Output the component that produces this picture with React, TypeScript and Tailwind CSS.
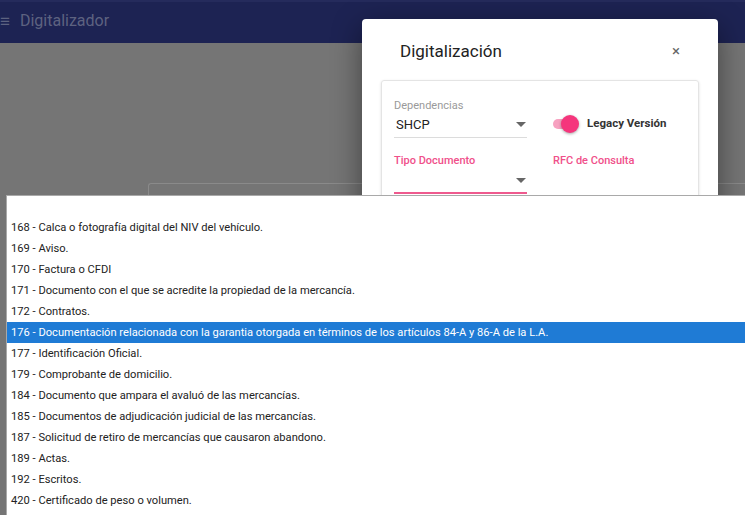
const options = [
  "",
  "168 - Calca o fotografía digital del NIV del vehículo.",
  "169 - Aviso.",
  "170 - Factura o CFDI",
  "171 - Documento con el que se acredite la propiedad de la mercancía.",
  "172 - Contratos.",
  "176 - Documentación relacionada con la garantia otorgada en términos de los artículos 84-A y 86-A de la L.A.",
  "177 - Identificación Oficial.",
  "179 - Comprobante de domicilio.",
  "184 - Documento que ampara el avaluó de las mercancías.",
  "185 - Documentos de adjudicación judicial de las mercancías.",
  "187 - Solicitud de retiro de mercancías que causaron abandono.",
  "189 - Actas.",
  "192 - Escritos.",
  "420 - Certificado de peso o volumen.",
]

function Caret() {
  return (
    <svg width="10" height="5" viewBox="0 0 10 5" className="shrink-0">
      <path d="M0 0h10L5 5z" fill="#666" />
    </svg>
  )
}

export default function App() {
  return (
    <div className="relative w-[745px] h-[515px] overflow-hidden bg-[#757575] font-['Roboto',sans-serif]">
      <header className="h-[43px] bg-[#1d2353] border-t-2 border-[#252b5c] flex items-center gap-[10px] text-[#5d6280]">
        <span className="text-[17px] leading-none -mt-[3px]">≡</span>
        <span className="text-[16px] -mt-[3px]">Digitalizador</span>
      </header>

      <div className="pt-[140px] pl-[148px]">
        <div className="h-[300px] border-t border-l border-[#8a8a8a] rounded-tl-[3px]" />
      </div>

      {/* dialog */}
      <div className="absolute left-[362px] top-[19px] w-[356px] h-[320px] bg-white rounded-[4px] shadow-[0_8px_30px_rgba(0,0,0,0.45)]">
        <div className="flex items-start justify-between pl-[38px] pr-[38px] pt-[20px] h-[61px]">
          <span className="text-[17px] text-[#222]">Digitalización</span>
          <span className="text-[15px] text-[#666] leading-none mt-[5px]">×</span>
        </div>
        <div className="mx-[19px] h-[200px] border border-[#e4e4e4] rounded-[3px] shadow-[0_1px_3px_rgba(0,0,0,0.12)] px-[12px] pt-[17px]">
          <div className="grid grid-cols-[133px_1fr] gap-x-[26px]">
            <div>
              <div className="text-[11px] text-[#9a9a9a]">Dependencias</div>
              <div className="h-[23px] flex items-center justify-between pl-[2px] pr-[1px] border-b border-[#dcdcdc] pb-[2px]">
                <span className="text-[13px] text-[#222]">SHCP</span>
                <Caret />
              </div>
            </div>
            <div className="flex items-center pt-[12px] gap-[8px]">
              <div className="relative w-[26px] h-[18px] flex items-center">
                <div className="w-[24px] h-[10px] rounded-full bg-[#f7a1c0]" />
                <div className="absolute left-[8px] top-[0px] w-[18px] h-[18px] rounded-full bg-[#f5357c] shadow-[0_1px_3px_rgba(0,0,0,0.35)]" />
              </div>
              <span className="text-[11.5px] font-bold text-[#333]">Legacy Versión</span>
            </div>
            <div className="mt-[15px]">
              <div className="text-[11px] font-medium text-[#f0508a]">Tipo Documento</div>
              <div className="h-[25px] flex items-end justify-end pb-[9px] pr-[1px] border-b-2 border-[#ee5a8e]">
                <Caret />
              </div>
            </div>
            <div className="mt-[15px]">
              <div className="text-[11px] font-medium text-[#f0508a]">RFC de Consulta</div>
            </div>
          </div>
        </div>
      </div>

      {/* open select list */}
      <div className="absolute left-[6px] top-[195px] right-0 bottom-0 bg-white border-l border-t border-[#a9a9a9]">
        {options.map((o, i) => (
          <div
            key={i}
            className={
              i === 6
                ? "h-[21px] flex items-center pl-[4px] pt-[1px] text-[11.15px] whitespace-nowrap bg-[#1f7bd5] text-white"
                : "h-[21px] flex items-center pl-[4px] pt-[1px] text-[11.15px] whitespace-nowrap text-[#222]"
            }
          >
            {o}
          </div>
        ))}
      </div>
    </div>
  )
}
